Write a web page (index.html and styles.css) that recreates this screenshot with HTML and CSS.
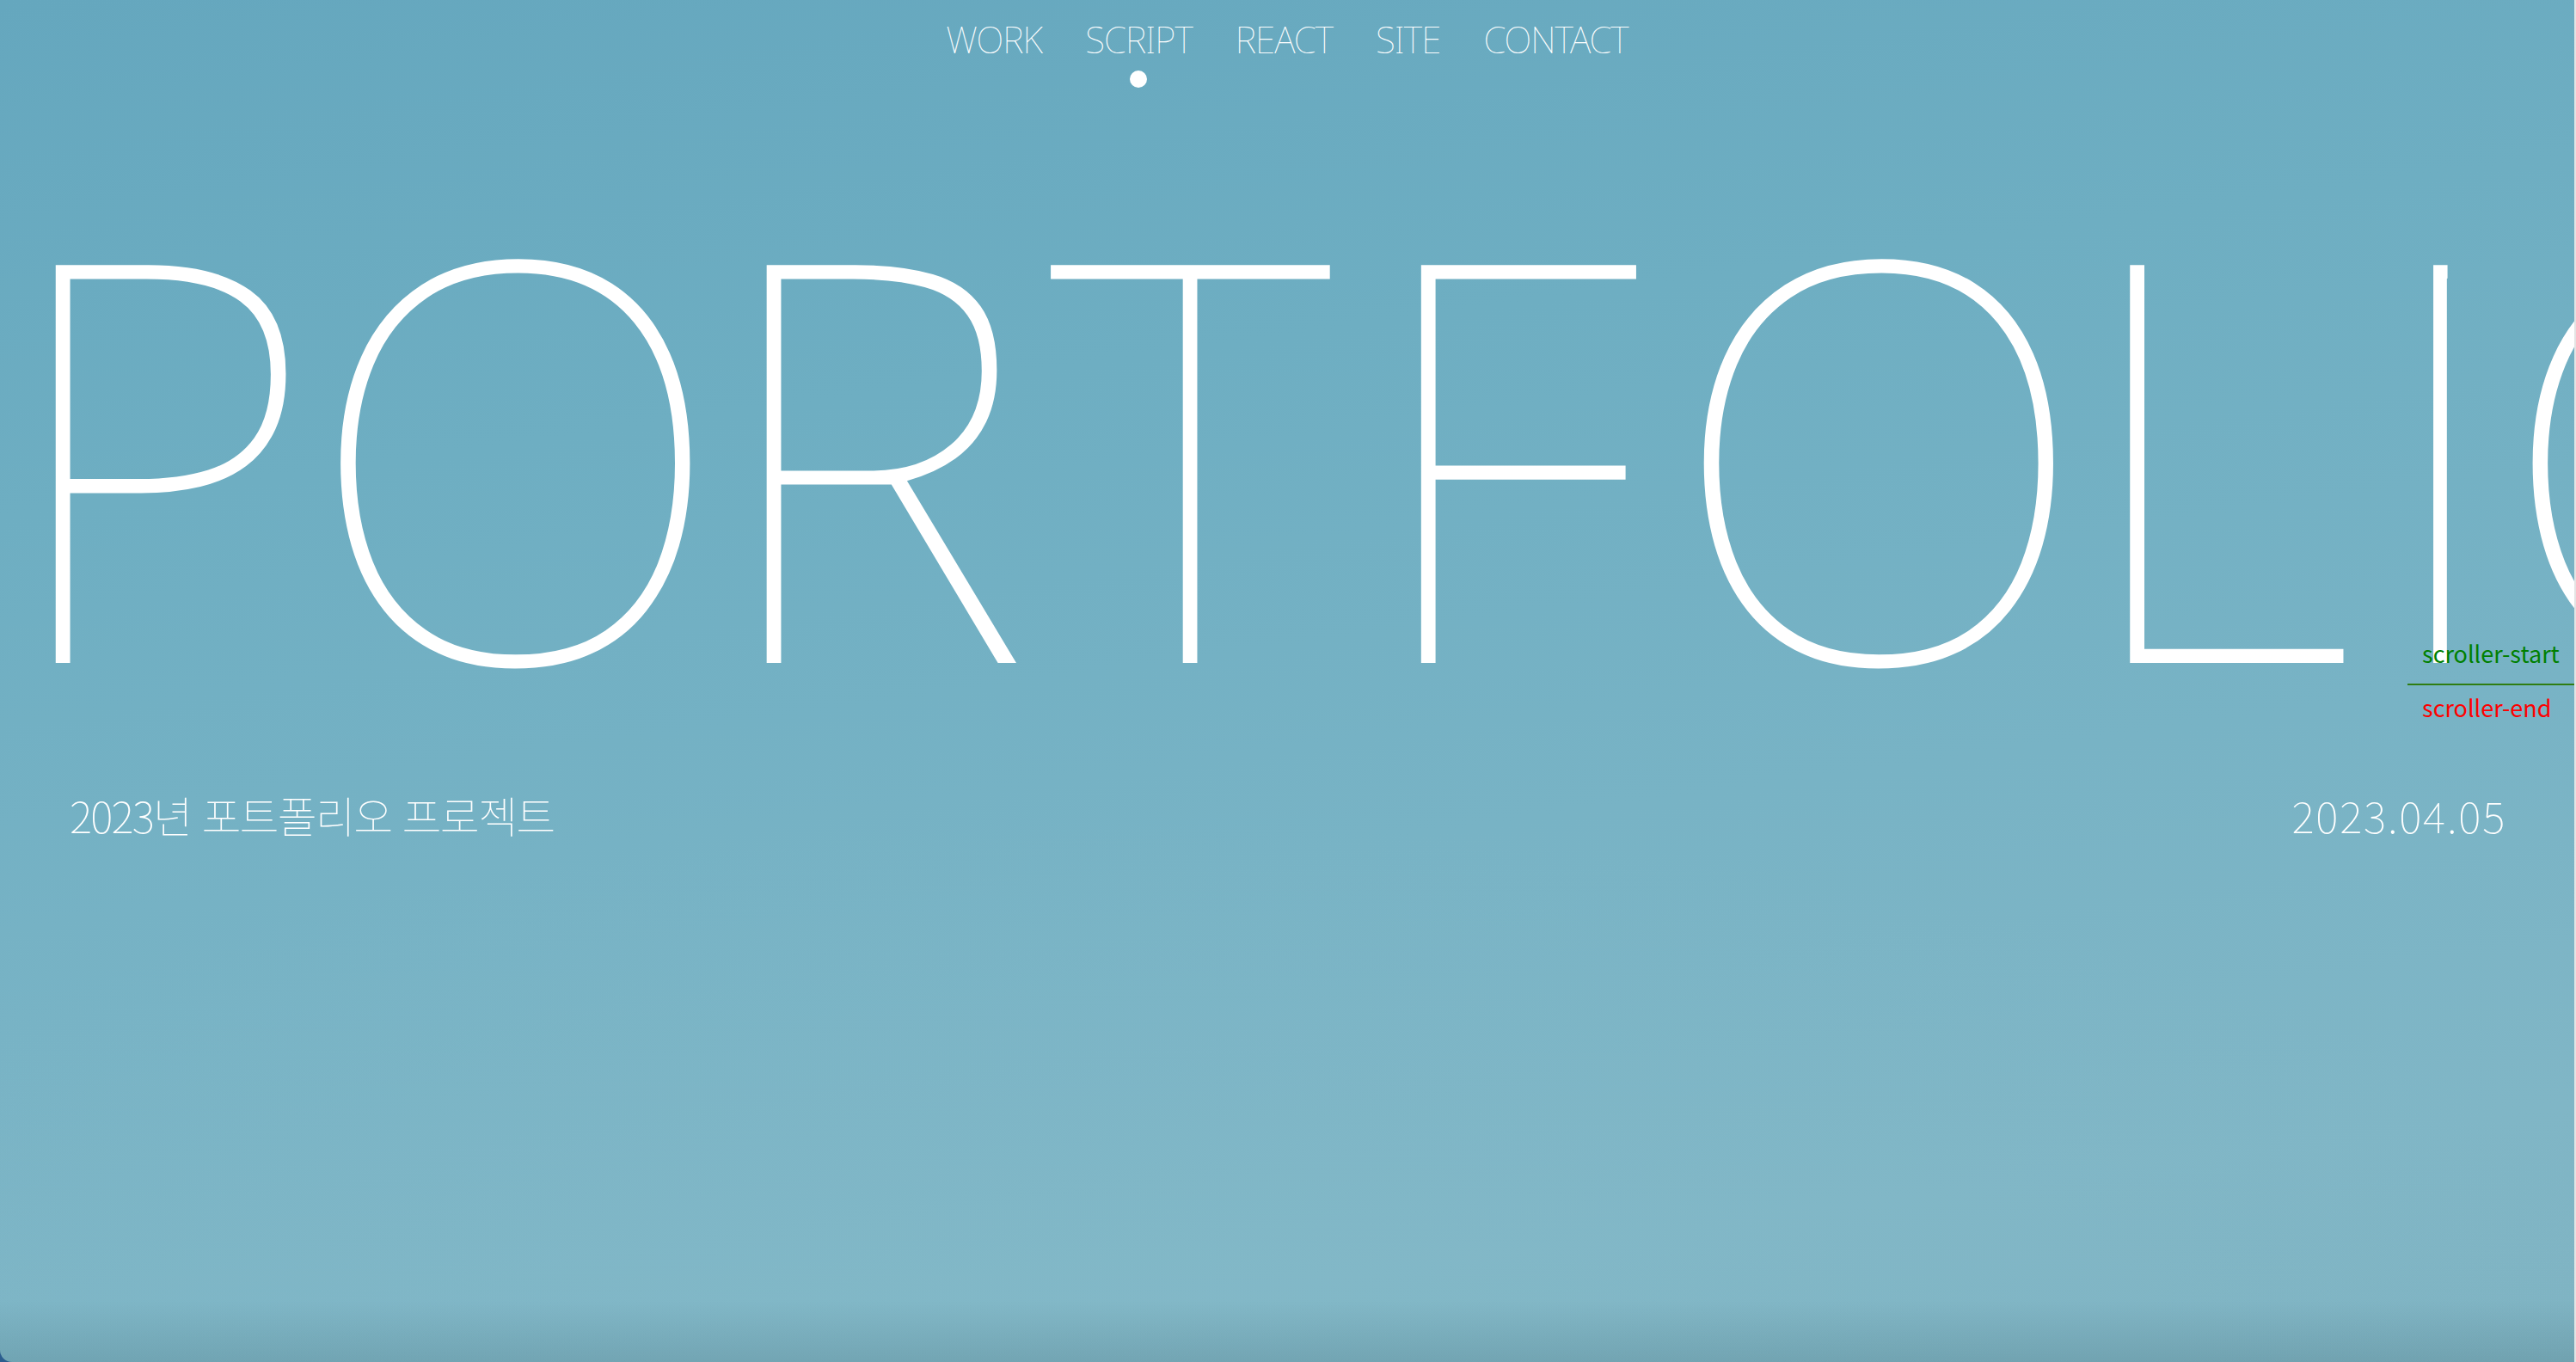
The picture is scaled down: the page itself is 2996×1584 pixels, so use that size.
FILE: index.html
```html
<!DOCTYPE html>
<html>
<head>
<meta charset="utf-8">
<title>Portfolio</title>
<link rel="stylesheet" href="styles.css">
</head>
<body>
<main class="page">
  <header class="header">
    <nav class="nav">
      <ul class="nav-list">
        <li class="nav-item"><a href="#work">WORK</a></li>
        <li class="nav-item active"><a href="#script">SCRIPT</a></li>
        <li class="nav-item"><a href="#react">REACT</a></li>
        <li class="nav-item"><a href="#site">SITE</a></li>
        <li class="nav-item"><a href="#contact">CONTACT</a></li>
      </ul>
    </nav>
  </header>
  <section class="intro">
    <h1 class="intro-title"><span class="char">P</span><span class="char">O</span><span class="char">R</span><span class="char">T</span><span class="char">F</span><span class="char">O</span><span class="char">L</span><span class="char char-i">I</span><span class="char">O</span></h1>
    <div class="intro-info">
      <p class="intro-desc" lang="ko">2023년 포트폴리오 프로젝트</p>
      <p class="intro-date">2023.04.05</p>
    </div>
  </section>
  <div class="markers">
    <div class="marker marker-start">scroller-start</div>
    <div class="marker marker-end">scroller-end</div>
  </div>
</main>
</body>
</html>
```
FILE: styles.css
```css
* { box-sizing: border-box; }
html, body { margin: 0; padding: 0; }
body {
  width: 2996px;
  height: 1584px;
  overflow: hidden;
  background: linear-gradient(to left, #e4e4e4 2px, #2c5d8e 2px);
  color: #fff;
}
.page {
  position: relative;
  width: 2994px;
  height: 1584px;
  overflow: hidden;
  border-bottom-left-radius: 14px;
  background:
    linear-gradient(180deg, rgba(60, 100, 110, 0) 95.5%, rgba(60, 100, 110, 0.22) 100%),
    radial-gradient(ellipse 60% 40% at 45% 100%, rgba(135, 188, 202, 0.35), rgba(135, 188, 202, 0) 100%),
    linear-gradient(172deg, #65a7be 0%, #6eaec2 30%, #78b3c5 60%, #80b6c6 85%, #7fb3c2 100%);
}
.header {
  display: flex;
  justify-content: center;
  height: 110px;
  padding-top: 16px;
}
.nav-list {
  display: flex;
  gap: 50px;
  list-style: none;
  margin: 0;
  padding: 0;
}
.nav-item {
  position: relative;
  font-family: "Noto Sans", sans-serif;
  font-weight: 100;
  font-size: 42px;
  line-height: 60px;
  letter-spacing: -0.9px;
}
.nav-item a {
  color: #fff;
  text-decoration: none;
}
.nav-item.active::after {
  content: "";
  position: absolute;
  left: 50%;
  top: 66px;
  width: 20px;
  height: 20px;
  margin-left: -10px;
  border-radius: 50%;
  background: #fff;
}
.intro {
  padding-top: 86px;
}
.intro-title {
  height: 648px;
  margin: 0;
  padding-left: 0;
  text-indent: -2px;
  font-family: "Noto Sans", sans-serif;
  font-weight: 150;
  font-stretch: 94%;
  font-size: 648px;
  line-height: 648px;
  white-space: nowrap;
}
.char:nth-child(1) { margin-right: -14px; }
.char:nth-child(2) { margin-right: -19px; }
.char:nth-child(3) { margin-right: 22px; }
.char:nth-child(4) { margin-right: 38px; }
.char:nth-child(5) { margin-right: 36px; }
.char:nth-child(6) { margin-right: -19px; }
.char:nth-child(7) { margin-right: 7px; }
.char:nth-child(8) { margin-right: -24px; }
.char-i {
  display: inline-block;
  text-indent: 0;
  clip-path: inset(0 calc(50% - 9.5px) 0 calc(50% - 7px));
}
.intro-info {
  display: flex;
  justify-content: space-between;
  align-items: baseline;
  margin-top: 73px;
  padding: 0 79px 0 81px;
}
.intro-desc,
.intro-date {
  margin: 0;
  font-family: "Noto Sans CJK KR", sans-serif;
  font-weight: 100;
  font-size: 50px;
  line-height: 60px;
}
.intro-desc {
  letter-spacing: -1.8px;
}
.intro-date {
  letter-spacing: 1.8px;
}
.markers {
  position: absolute;
  right: 0;
  top: 743px;
  width: 194px;
}
.marker {
  font-family: "Noto Sans CJK KR", sans-serif;
  font-size: 27px;
  line-height: 34px;
  padding-left: 17px;
  white-space: nowrap;
}
.marker-start {
  color: #008000;
  padding-bottom: 18px;
  border-bottom: 2px solid #2f7d12;
}
.marker-end {
  color: #ff0000;
  margin-top: 9px;
}
```
